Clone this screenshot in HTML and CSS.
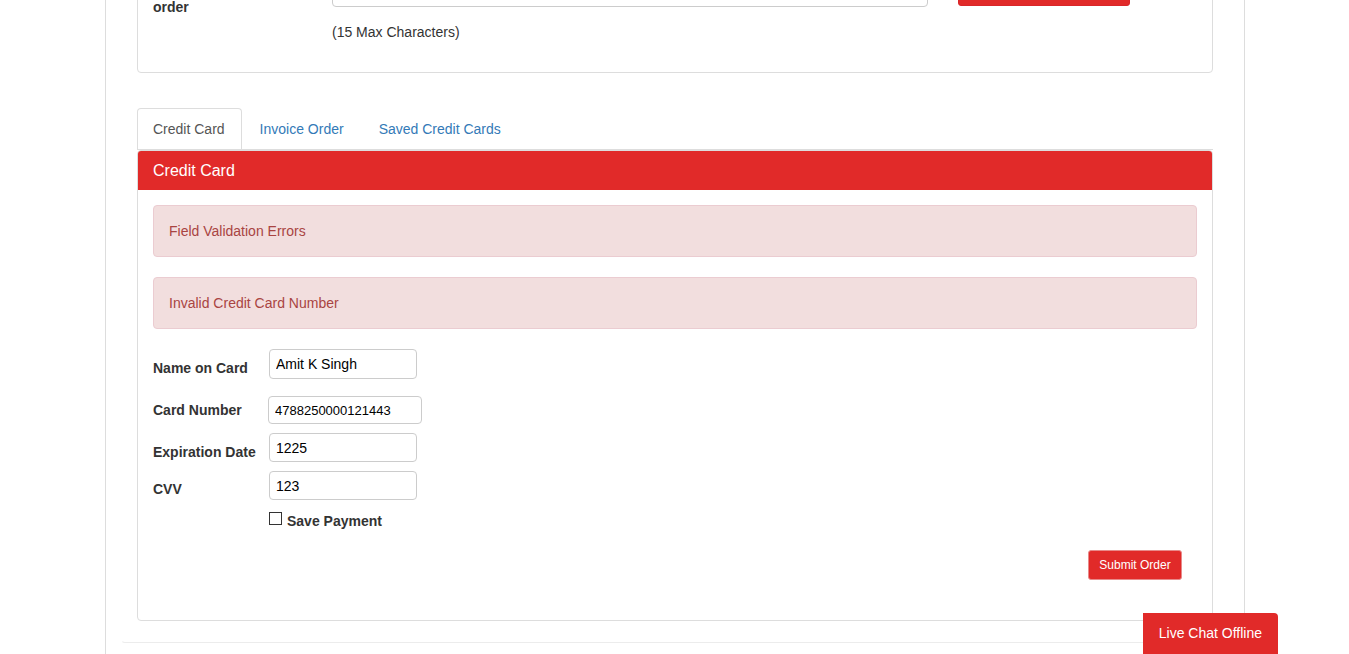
FILE: index.html
```html
<!DOCTYPE html>
<html lang="en">
<head>
<meta charset="utf-8">
<title>Checkout - Payment</title>
<link rel="stylesheet" href="styles.css">
</head>
<body>
<div class="page">
  <div class="card">
    <div class="po-panel">
      <div class="po-row">
        <label class="po-label">Reference for this<br>order</label>
        <div class="po-field">
          <input class="po-input" type="text" value="">
          <div class="hint">(15 Max Characters)</div>
        </div>
        <div class="po-action">
          <button class="btn-red-lg" type="button">Update</button>
        </div>
      </div>
    </div>

    <ul class="tabs">
      <li class="tab active"><a>Credit Card</a></li>
      <li class="tab"><a>Invoice Order</a></li>
      <li class="tab"><a>Saved Credit Cards</a></li>
    </ul>

    <div class="pay-panel">
      <div class="pay-heading">Credit Card</div>
      <div class="pay-body">
        <div class="alert">Field Validation Errors</div>
        <div class="alert">Invalid Credit Card Number</div>

        <div class="form">
          <div class="frow frow-name">
            <label class="flabel lbl-9">Name on Card</label>
            <input class="finput w148" type="text" value="Amit K Singh">
          </div>
          <div class="frow frow-card">
            <label class="flabel lbl-4">Card Number</label>
            <input class="finput finput-card" type="text" value="4788250000121443">
          </div>
          <div class="frow frow-exp">
            <label class="flabel lbl-9">Expiration Date</label>
            <input class="finput w148 h29" type="text" value="1225">
          </div>
          <div class="frow frow-cvv">
            <label class="flabel lbl-8">CVV</label>
            <input class="finput w148 h29" type="text" value="123">
          </div>
          <div class="frow-check">
            <span class="checkbox"></span>
            <span class="check-label">Save Payment</span>
          </div>
          <div class="submit-row">
            <button class="btn-submit" type="button">Submit Order</button>
          </div>
        </div>
      </div>
    </div>
  </div>
</div>

<div class="live-chat">Live Chat Offline</div>
</body>
</html>
```

FILE: styles.css
```css
* { box-sizing: border-box; }

html, body {
  margin: 0;
  padding: 0;
  background: #fff;
  font-family: "Liberation Sans", Arial, sans-serif;
  font-size: 14px;
  line-height: 20px;
  color: #333;
  overflow: hidden;
}

.page {
  margin-left: 105px;
  width: 1140px;
  min-height: 100vh;
  border-left: 1px solid #ddd;
  border-right: 1px solid #ddd;
}

.card {
  margin: 0 15px;
  border: 1px solid transparent;
  border-bottom-color: #ececec;
  border-radius: 4px;
  padding: 15px 15px 21px;
}

/* top PO panel (scrolled partly out of view) */
.po-panel {
  margin-top: -59px;
  margin-bottom: 35px;
  border: 1px solid #ddd;
  border-radius: 4px;
  padding: 15px;
}

.po-row {
  display: flex;
  align-items: flex-start;
}

.po-label {
  width: 179px;
  padding-top: 4px;
  padding-right: 15px;
  font-weight: bold;
  color: #333;
}

.po-field {
  width: 596px;
}

.po-input {
  display: block;
  width: 596px;
  height: 34px;
  border: 1px solid #ccc;
  border-radius: 4px;
  padding: 6px 12px;
  font: inherit;
}

.hint {
  margin-top: 15px;
  margin-bottom: 15px;
  color: #333;
}

.po-action {
  margin-left: 30px;
}

.btn-red-lg {
  display: block;
  width: 172px;
  height: 33px;
  border: 1px solid #d9262a;
  border-radius: 3px;
  background: #e12a29;
  color: #fff;
  font: inherit;
}

/* tabs */
.tabs {
  list-style: none;
  margin: 0;
  padding: 0;
  display: flex;
  border-bottom: 1px solid #ddd;
}

.tab {
  margin-right: 2px;
}

.tab a {
  display: block;
  padding: 10px 16px 10px 15px;
  border: 1px solid transparent;
  border-bottom: 0;
  border-radius: 4px 4px 0 0;
  color: #337ab7;
  line-height: 20px;
}

.tab.active a {
  color: #555;
  border-color: #ddd;
  background: #fff;
}

/* payment panel */
.pay-panel {
  border: 1px solid #ddd;
  border-radius: 4px;
}

.pay-heading {
  background: #e12a29;
  border-bottom: 1px solid #e12a29;
  border-radius: 3px 3px 0 0;
  color: #fff;
  font-size: 16px;
  line-height: 17px;
  padding: 11px 15px 10px;
}

.pay-body {
  padding: 15px;
}

.alert {
  background: #f2dede;
  border: 1px solid #ebccd1;
  border-radius: 4px;
  color: #a94442;
  padding: 15px;
  margin-bottom: 20px;
}

.frow {
  display: flex;
  align-items: flex-start;
}

.frow-name { margin-bottom: 17px; }
.frow-card { margin-bottom: 9px; }
.frow-exp { margin-bottom: 9px; }
.frow-cvv { margin-bottom: 11px; }

.flabel {
  width: 116px;
  flex: none;
  font-weight: bold;
  color: #333;
}

.lbl-9 { padding-top: 9px; }
.lbl-8 { padding-top: 8px; }
.lbl-4 { padding-top: 4px; }

.finput {
  height: 30px;
  border: 1px solid #ccc;
  border-radius: 4px;
  padding: 0 6px;
  font-family: "Liberation Sans", Arial, sans-serif;
  font-size: 14px;
  color: #000;
  background: #fff;
}

.w148 { width: 148px; }
.h29 { height: 29px; }

.finput-card {
  width: 154px;
  height: 28px;
  margin-left: -1px;
  font-size: 13px;
  padding: 0 6px;
}

.frow-check {
  display: flex;
  align-items: flex-start;
  padding-left: 116px;
  line-height: 20px;
}

.checkbox {
  width: 13px;
  height: 13px;
  margin-top: 1px;
  border: 1px solid #333;
  background: #fff;
  flex: none;
}

.check-label {
  margin-left: 5px;
  font-weight: bold;
  color: #333;
}

.submit-row {
  display: flex;
  justify-content: flex-end;
  margin-top: 19px;
  padding-right: 15px;
  margin-bottom: 25px;
}

.btn-submit {
  width: 94px;
  height: 30px;
  padding: 0;
  border: 1px solid #e88a8a;
  border-radius: 3px;
  background: #e12a29;
  color: #fff;
  font-family: "Liberation Sans", Arial, sans-serif;
  font-size: 12px;
}

/* live chat widget (overlay) */
.live-chat {
  position: fixed;
  right: 71px;
  bottom: 0;
  height: 41px;
  padding: 10px 16px;
  background: #e12a29;
  color: #fff;
  font-size: 14px;
  line-height: 20px;
  border-radius: 0 4px 0 0;
}
```
